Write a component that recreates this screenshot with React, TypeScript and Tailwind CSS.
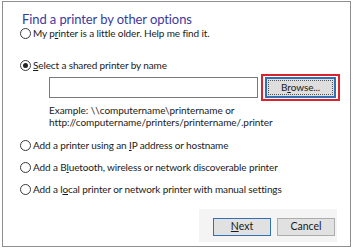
import React from "react";

const font = { fontFamily: 'Lato, "Noto Sans", sans-serif' };

function Radio({ checked }: { checked?: boolean }) {
  return (
    <span className="w-[11px] h-[11px] rounded-full border border-[#3a3a3a] bg-white flex items-center justify-center shrink-0">
      {checked && <span className="w-[5px] h-[5px] rounded-full bg-[#222]" />}
    </span>
  );
}

function Row({ children, checked, className }: { children: React.ReactNode; checked?: boolean; className?: string }) {
  return (
    <div className={"flex items-center h-[14px] ml-[17px] gap-[2px] " + (className || "")}>
      <Radio checked={checked} />
      <span className="text-[10px] tracking-[-0.12px] leading-[14px] text-[#1a1a1a] whitespace-nowrap">{children}</span>
    </div>
  );
}

export default function App() {
  return (
    <div className="w-[354px] h-[249px] bg-white pt-px pl-[2px]" style={font}>
      <div className="w-[349px] h-[246px] border border-[#8e8e8e] flex flex-col bg-white">
        <div className="mt-[10px] ml-[19px] h-[14px] text-[13px] tracking-[-0.1px] leading-[14px] text-[#3b3b9e] whitespace-nowrap">
          Find a printer by other options
        </div>
        <Row>
          My p<u>r</u>inter is a little older. Help me find it.
        </Row>
        <Row checked className="mt-[18px]">
          <u>S</u>elect a shared printer by name
        </Row>
        <div className="mt-[2px] h-[27px] flex items-center">
          <div className="ml-[46px] w-[209px] h-[21px] border border-[#7a7a7a] bg-white" />
          <div className="ml-[3px] w-[79px] h-[27px] border-2 border-[#d9232e] px-[2px] py-px">
            <div className="w-full h-full bg-[#dedede] border-2 border-[#3270b4] p-px">
              <div className="w-full h-full border border-dotted border-[#555] flex items-center justify-center text-[10px] tracking-[-0.12px] text-[#1a1a1a]">
                B<u>r</u>owse...
              </div>
            </div>
          </div>
        </div>
        <div className="mt-[3px] ml-[46px] text-[10px] tracking-[-0.05px] leading-[12px] text-[#1a1a1a] whitespace-nowrap">
          <div>Example: \\computername\printername or</div>
          <div>http://computername/printers/printername/.printer</div>
        </div>
        <Row className="mt-[10px]">
          Add a printer using an <u>I</u>P address or hostname
        </Row>
        <Row className="mt-[8px]">
          Add a B<u>l</u>uetooth, wireless or network discoverable printer
        </Row>
        <Row className="mt-[8px]">
          Add a l<u>o</u>cal printer or network printer with manual settings
        </Row>
        <div className="mt-[13px] ml-[196px] w-[138px] h-[33px] bg-[#f4f4f4] flex items-start pt-[9px] pl-[14px] gap-[6px]">
          <div className="w-[58px] h-[18px] bg-[#e1e1e1] border border-[#3270b4] flex items-center justify-center text-[10.5px] text-[#1a1a1a]">
            <span>
              <u>N</u>ext
            </span>
          </div>
          <div className="w-[58px] h-[18px] bg-[#e1e1e1] border border-[#adadad] flex items-center justify-center text-[10.5px] text-[#1a1a1a]">
            Cancel
          </div>
        </div>
      </div>
    </div>
  );
}
